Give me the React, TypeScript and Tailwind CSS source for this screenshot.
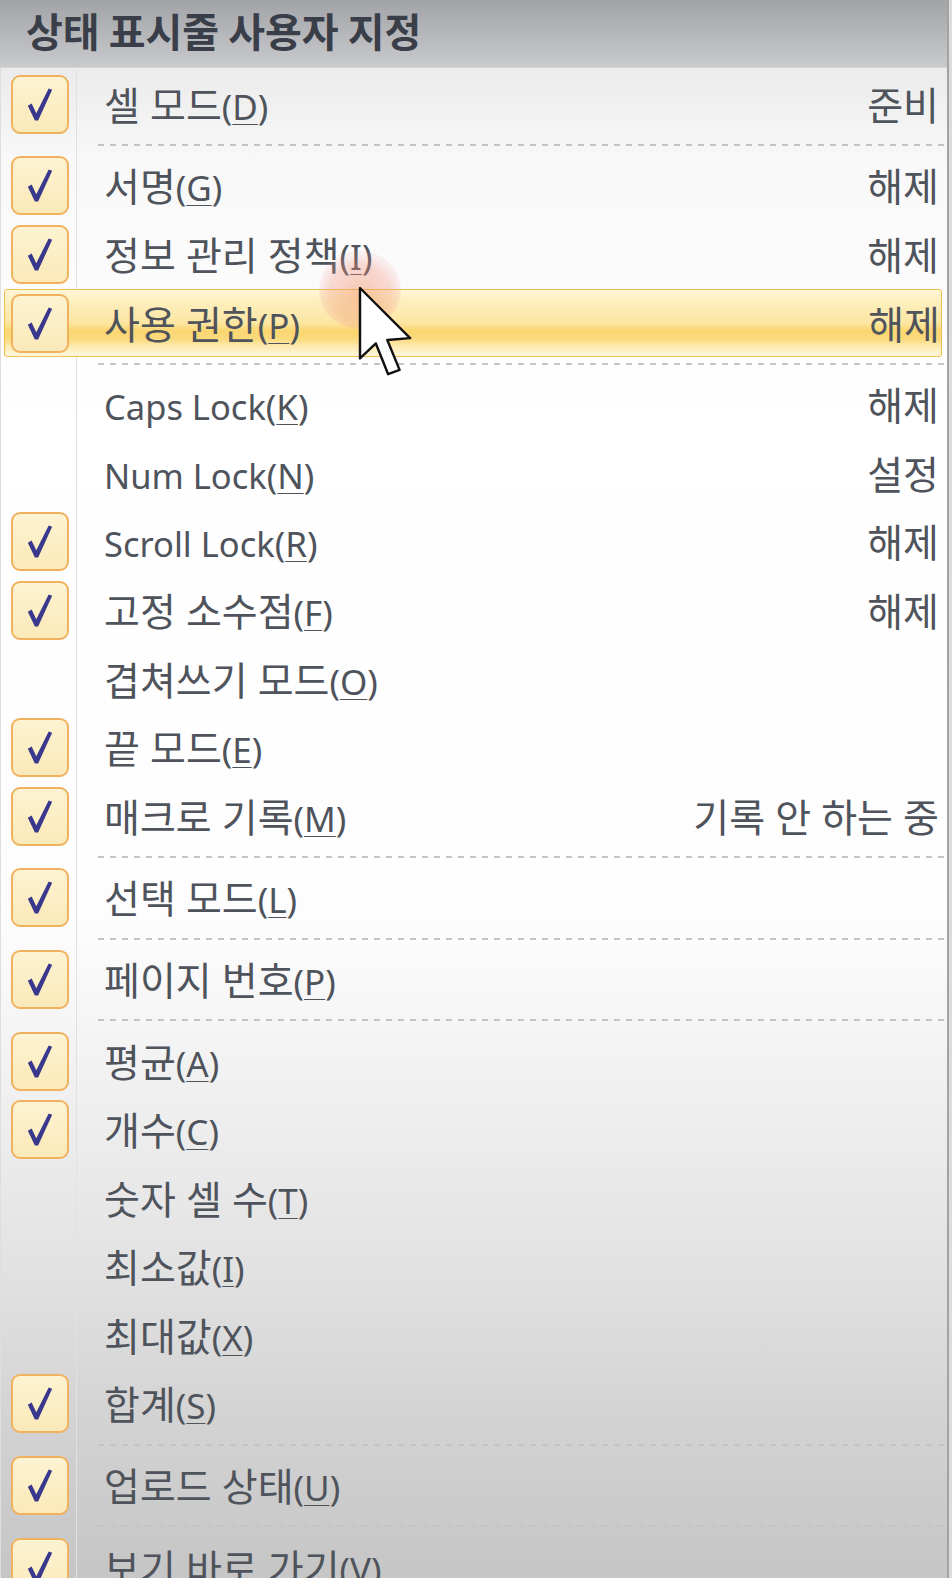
import React from "react";

type Item = { l: string; k: string; v?: string; c?: boolean; hi?: boolean; sep?: boolean };

const items: Item[] = [
  { l: "셀 모드", k: "D", v: "준비", c: true, sep: true },
  { l: "서명", k: "G", v: "해제", c: true },
  { l: "정보 관리 정책", k: "I", v: "해제", c: true },
  { l: "사용 권한", k: "P", v: "해제", c: true, hi: true, sep: true },
  { l: "Caps Lock", k: "K", v: "해제" },
  { l: "Num Lock", k: "N", v: "설정" },
  { l: "Scroll Lock", k: "R", v: "해제", c: true },
  { l: "고정 소수점", k: "F", v: "해제", c: true },
  { l: "겹쳐쓰기 모드", k: "O" },
  { l: "끝 모드", k: "E", c: true },
  { l: "매크로 기록", k: "M", v: "기록 안 하는 중", c: true, sep: true },
  { l: "선택 모드", k: "L", c: true, sep: true },
  { l: "페이지 번호", k: "P", c: true, sep: true },
  { l: "평균", k: "A", c: true },
  { l: "개수", k: "C", c: true },
  { l: "숫자 셀 수", k: "T" },
  { l: "최소값", k: "I" },
  { l: "최대값", k: "X" },
  { l: "합계", k: "S", c: true, sep: true },
  { l: "업로드 상태", k: "U", c: true, sep: true },
  { l: "보기 바로 가기", k: "V", c: true },
];

function Check() {
  return (
    <div className="w-[58px] h-[59px] rounded-[9px] border-2 border-[#f0b25e] bg-[linear-gradient(180deg,#fdf3d2,#fbe9b8)] flex items-center justify-center">
      <svg width="26" height="33" viewBox="0 0 24 32">
        <path d="M0.2 17.2 L3.9 15 L8.4 24.4 L20.4 0.4 L23.8 1.6 L10.2 31.6 L7 31.6 Z" fill="#3a388c" />
      </svg>
    </div>
  );
}

function Label({ l, k }: { l: string; k: string }) {
  const latin = /^[A-Za-z ]+$/.test(l);
  return (
    <span className="whitespace-pre">
      {latin ? <span className="text-[34.5px]">{l}</span> : <span>{l}</span>}
      <span className="text-[35px]">
        (<span className="underline decoration-1 underline-offset-[4px]">{k}</span>)
      </span>
    </span>
  );
}

function Row({ it }: { it: Item }) {
  if (it.hi) {
    return (
      <div className="h-[68.6px] pl-[3px] pr-[5px]">
        <div className="h-full flex items-center rounded-[3px] border border-[#efc04e] bg-[linear-gradient(180deg,#fff6d6_0%,#fdefbe_18%,#fce6a2_50%,#fbd670_62%,#fbda7c_74%,#fdebb4_86%,#fff7da_100%)]">
          <div className="w-[72px] h-full flex items-center pl-[6px]">{it.c && <Check />}</div>
          <div className="flex-1 pl-[27px] pr-[1px] flex items-center justify-between">
            <Label l={it.l} k={it.k} />
            <span>{it.v}</span>
          </div>
        </div>
      </div>
    );
  }
  return (
    <div className="h-[68.6px] flex items-center">
      <div className="w-[76px] h-full border-r border-[#e1e1e1] flex items-center pl-[10px]">{it.c && <Check />}</div>
      <div className="flex-1 pl-[27px] pr-[8px] flex items-center justify-between">
        <Label l={it.l} k={it.k} />
        <span>{it.v}</span>
      </div>
    </div>
  );
}

function Sep() {
  return (
    <div className="h-[13px] flex items-center">
      <div className="w-[76px] h-full border-r border-[#e1e1e1]" />
      <div className="flex-1 pl-[21px]">
        <div className="h-[2px] bg-[repeating-linear-gradient(90deg,#c4c4c4_0px,#c4c4c4_6px,transparent_6px,transparent_12px)]" />
      </div>
    </div>
  );
}

export default function App() {
  return (
    <div className="relative w-[952px] h-[1578px] overflow-hidden bg-[#dcdcdc] font-['Noto_Sans','Noto_Sans_CJK_KR',sans-serif]">
      <div className="w-[949px] h-full border-r-2 border-[#a3a3a3] flex flex-col">
        <div className="h-[67px] shrink-0 bg-[linear-gradient(180deg,#a2a3a7,#c9cacd)] flex items-center pl-[26px] pb-[7px]">
          <span className="text-[40px] leading-none font-bold text-[#3a3e48] font-['Noto_Sans_CJK_KR',sans-serif]">상태 표시줄 사용자 지정</span>
        </div>
        <div className="h-[1px] bg-[#d6d6d6] shrink-0" />
        <div className="flex-1 pt-[2px] border-l border-[#dedede] text-[39px] leading-none text-[#4f535b] bg-[linear-gradient(180deg,#ebebec_0px,#f8f8f8_90px,#ffffff_350px,#fdfdfd_850px,#eeeeee_1050px,#e2e2e2_1200px,#d3d3d3_1350px,#c6c6c6_1500px)]">
          {items.map((it, i) => (
            <React.Fragment key={i}>
              <Row it={it} />
              {it.sep && <Sep />}
            </React.Fragment>
          ))}
        </div>
      </div>
      <svg className="absolute left-0 top-0 pointer-events-none" width="952" height="1578">
        <defs>
          <radialGradient id="hl" cx="0.5" cy="0.55" r="0.5">
            <stop offset="0" stopColor="#f08a5a" stopOpacity="0.45" />
            <stop offset="0.75" stopColor="#f0907a" stopOpacity="0.32" />
            <stop offset="1" stopColor="#f2a0a0" stopOpacity="0.15" />
          </radialGradient>
        </defs>
        <ellipse cx="360" cy="290" rx="41" ry="39" fill="url(#hl)" />
        <g transform="translate(360 288) scale(4.4)">
          <path d="M0 0 L0 16 L3.6 12.6 L6.4 19.6 L9 18.6 L6.2 11.8 L11.4 11.4 Z" fill="#ffffff" stroke="#111111" strokeWidth="0.55" strokeLinejoin="round" />
        </g>
      </svg>
    </div>
  );
}
